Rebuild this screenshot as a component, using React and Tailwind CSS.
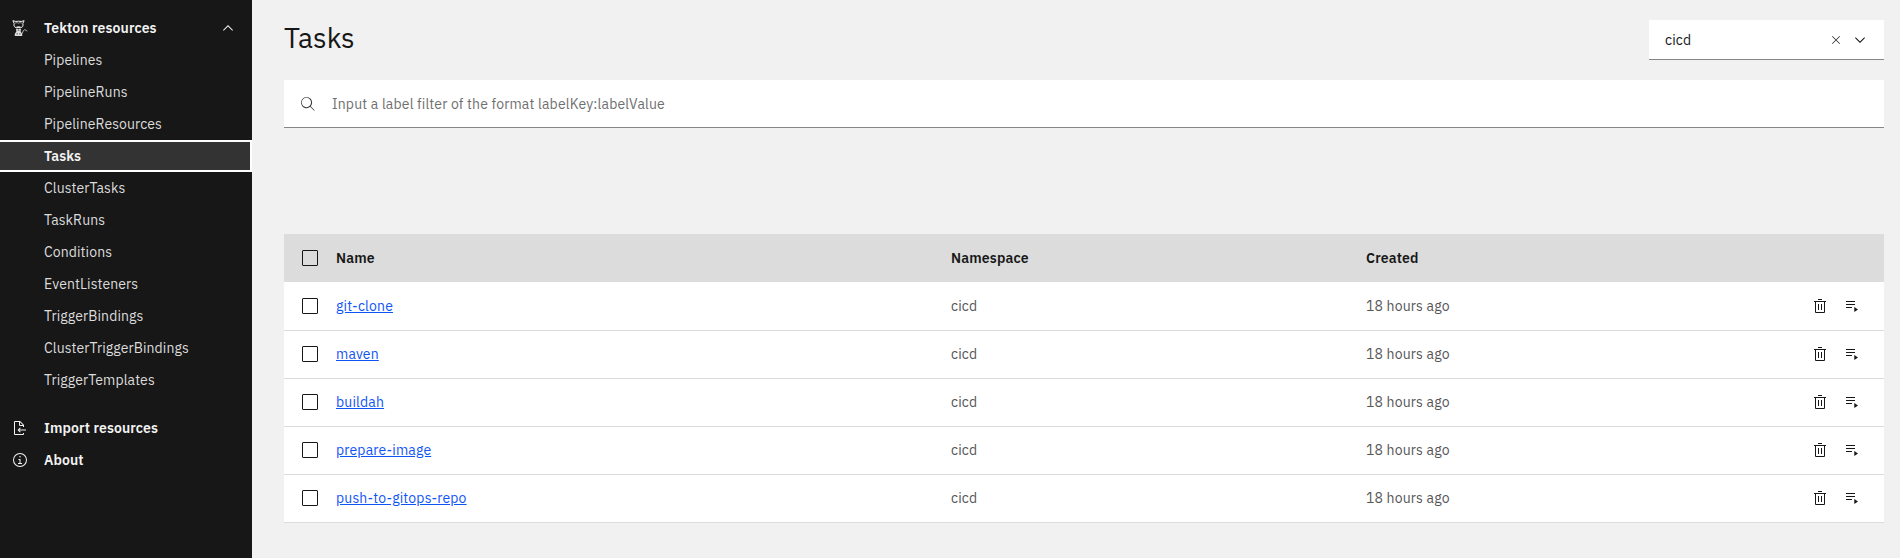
const resources = [
  "Pipelines",
  "PipelineRuns",
  "PipelineResources",
  "Tasks",
  "ClusterTasks",
  "TaskRuns",
  "Conditions",
  "EventListeners",
  "TriggerBindings",
  "ClusterTriggerBindings",
  "TriggerTemplates",
];

const tasks = ["git-clone", "maven", "buildah", "prepare-image", "push-to-gitops-repo"];

function Icon({ size = 32, className = "", children }) {
  return (
    <svg
      className={`h-4 w-4 shrink-0 fill-current ${className}`}
      viewBox={`0 0 ${size} ${size}`}
      aria-hidden="true"
    >
      {children}
    </svg>
  );
}

function CatIcon() {
  return (
    <Icon size={16}>
      <g fill="none" stroke="currentColor">
        <path
          d="M2.2 3.6.9.7 3.8 1.5Q6.5.9 9.2 1.5L12.1.7 10.8 3.6Q11.8 7.2 8.6 7.6H4.4Q1.2 7.2 2.2 3.6Z"
          strokeWidth="1"
          strokeLinejoin="round"
        />
        <path d="M3 3.1 5 2.6 6.5 3.2 8 2.6 10 3.1" strokeWidth=".8" opacity=".7" />
        <path d="M10.2 13.6Q11 9.7 12.8 9.7 14.4 9.8 15 11.4" strokeWidth=".9" opacity=".75" />
      </g>
      <path d="M4.6 6.3H8.4V7.6H4.6z" opacity=".8" />
      <path
        d="M4 8.9 5 8.6 6.5 9.4 8 8.6 9 8.9 8.6 11.6 10.2 13.8V16H2.8V13.8L4.4 11.6zM5.6 10.4V11.1H7.4V10.4zM4.7 13.2V14.6H5.5V13.2zM7.5 13.2V14.6H8.3V13.2z"
        fillRule="evenodd"
        opacity=".9"
      />
    </Icon>
  );
}

function ImportIcon() {
  return (
    <Icon>
      <path d="M28 19 14.83 19 17.41 16.41 16 15 11 20 16 25 17.41 23.59 14.83 21 28 21 28 19z" />
      <path d="M24,14V10a1,1,0,0,0-.29-.71l-7-7A1,1,0,0,0,16,2H6A2,2,0,0,0,4,4V28a2,2,0,0,0,2,2H22a2,2,0,0,0,2-2V26H22v2H6V4h8v6a2,2,0,0,0,2,2h6v2Zm-8-4V4.41L21.59,10Z" />
    </Icon>
  );
}

function InfoIcon() {
  return (
    <Icon>
      <path d="M17 22 17 14 13 14 13 16 15 16 15 22 12 22 12 24 20 24 20 22 17 22z" />
      <path d="M16,8a1.5,1.5,0,1,0,1.5,1.5A1.5,1.5,0,0,0,16,8Z" />
      <path d="M16,30A14,14,0,1,1,30,16,14,14,0,0,1,16,30ZM16,4A12,12,0,1,0,28,16,12,12,0,0,0,16,4Z" />
    </Icon>
  );
}

function Checkbox() {
  return <span className="block h-4 w-4 shrink-0 rounded-[1px] border border-[#171717]" />;
}

function NavHeading({ icon, label, children }) {
  return (
    <div className="flex h-8 items-center pr-4 pl-3 font-semibold text-[#f3f3f3]">
      {icon}
      <span className="ml-4 grow">{label}</span>
      {children}
    </div>
  );
}

function Sidebar() {
  return (
    <nav className="w-[252px] shrink-0 bg-[#171717] pt-3 tracking-[0.1px]">
      <NavHeading icon={<CatIcon />} label="Tekton resources">
        <Icon size={16}>
          <path d="M8 5 13 10 12.3 10.7 8 6.4 3.7 10.7 3 10z" />
        </Icon>
      </NavHeading>
      <ul>
        {resources.map((name) => (
          <li
            key={name}
            className={
              name === "Tasks"
                ? "flex h-8 items-center border-y-2 border-r-2 border-white bg-[#333333] pl-11 font-semibold text-[#f3f3f3]"
                : "flex h-8 items-center pl-11 text-[#dcdcdc]"
            }
          >
            {name}
          </li>
        ))}
      </ul>
      <div className="mt-4">
        <NavHeading icon={<ImportIcon />} label="Import resources" />
        <NavHeading icon={<InfoIcon />} label="About" />
      </div>
    </nav>
  );
}

export default function App() {
  return (
    <div className="flex h-[558px] w-[1900px] bg-[#f1f1f1] font-['IBM_Plex_Sans',Roboto,sans-serif] text-[14px] leading-5 tracking-[0.16px] text-[#171717]">
      <Sidebar />
      <main className="flex grow flex-col pt-5 pr-4 pl-8">
        <header className="flex h-10 items-start justify-between">
          <h1 className="text-[28px] leading-9 tracking-normal">Tasks</h1>
          <div className="flex h-10 w-[235px] items-center border-b border-[#868686] bg-white px-4 pt-px">
            <span className="grow">cicd</span>
            <Icon className="mr-2">
              <path d="M24 8.9 23.1 8 16 15.1 8.9 8 8 8.9 15.1 16 8 23.1 8.9 24 16 16.9 23.1 24 24 23.1 16.9 16z" />
            </Icon>
            <Icon size={16}>
              <path d="M8 11 3 6 3.7 5.3 8 9.6 12.3 5.3 13 6z" />
            </Icon>
          </div>
        </header>

        <div className="mt-5 flex h-12 items-center border-b border-[#868686] bg-white pt-px pl-4">
          <Icon className="text-[#393939]">
            <path d="M29.3,28.4l-7.8-7.9a11,11,0,1,0-1.1,1.1L28.3,29.4ZM3.5,13a9.3,9.3,0,1,1,9.3,9.3A9.3,9.3,0,0,1,3.5,13Z" />
          </Icon>
          <span className="ml-4 text-[#6f6f6f]">
            Input a label filter of the format labelKey:labelValue
          </span>
        </div>

        <section className="mt-[106px] border-b border-[#dcdcdc]">
          <div className="grid h-12 grid-cols-[52px_615px_415px_1fr] items-center bg-[#dcdcdc] font-semibold">
            <div className="pl-[18px]">
              <Checkbox />
            </div>
            <div>Name</div>
            <div>Namespace</div>
            <div>Created</div>
          </div>
          {tasks.map((name, i) => (
            <div
              key={name}
              className={`grid h-12 grid-cols-[52px_615px_415px_1fr] items-center bg-white text-[#565656] ${
                i > 0 ? "shadow-[inset_0_1px_#dcdcdc]" : ""
              }`}
            >
              <div className="pl-[18px]">
                <Checkbox />
              </div>
              <div>
                <a className="text-[#0f55f5] underline">{name}</a>
              </div>
              <div>cicd</div>
              <div className="flex items-center justify-between pr-6">
                <span>18 hours ago</span>
                <span className="flex gap-4 text-[#171717]">
                  <Icon>
                    <path d="M12 12H14V24H12zM18 12H20V24H18z" />
                    <path d="M4 6V8H6V28a2 2 0 0 0 2 2H24a2 2 0 0 0 2-2V8h2V6zM8 28V8H24V28zM12 2H20V4H12z" />
                  </Icon>
                  <Icon size={16}>
                    <path d="M2 3H11V4H2zM2 6H11V7H2zM2 9H8V10H2zM10.3 9V14L14 11.5z" />
                  </Icon>
                </span>
              </div>
            </div>
          ))}
        </section>
      </main>
    </div>
  );
}
